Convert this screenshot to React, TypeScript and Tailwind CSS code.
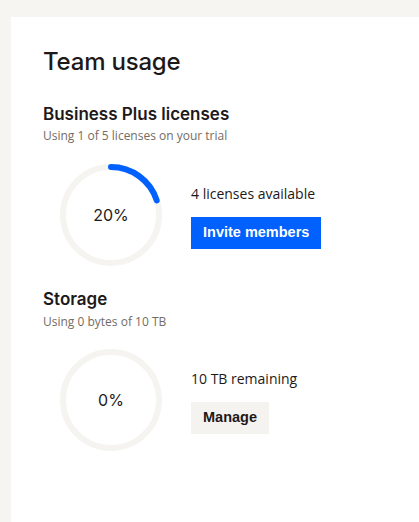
import React from "react";

function Ring({ pct, label }: { pct: number; label: string }) {
  const r = 48;
  const c = 2 * Math.PI * r;
  return (
    <div className="relative w-[104px] h-[104px] shrink-0">
      <svg width="104" height="104" viewBox="0 0 104 104">
        <circle cx="52" cy="52" r={r} fill="none" stroke="#f6f4f1" strokeWidth="6" />
        {pct > 0 && (
          <circle
            cx="52"
            cy="52"
            r={r}
            fill="none"
            stroke="#0061fe"
            strokeWidth="6"
            strokeLinecap="round"
            strokeDasharray={`${(c * pct) / 100} ${c}`}
            transform="rotate(-90 52 52)"
          />
        )}
      </svg>
      <div className="absolute inset-0 flex items-center justify-center text-[16px] text-[#1e1919] font-['Inter',sans-serif]">
        {label}
      </div>
    </div>
  );
}

export default function App() {
  return (
    <div className="min-h-[522px] bg-[#f7f5f2] pl-[11px] pt-[17px] flex flex-col">
      <div className="bg-white flex-1 min-h-[505px] pl-[32px] pt-[29px] text-[#1e1919] font-['Liberation_Sans',Arial,sans-serif]">
        <h1 className="text-[24px] leading-[32px] font-medium font-['Inter',sans-serif] tracking-[-0.2px]">Team usage</h1>

        <h2 className="mt-[25px] text-[17px] leading-[22px] font-semibold font-['Inter',sans-serif]">Business Plus licenses</h2>
        <p className="mt-[3px] text-[12px] leading-[16px] text-[#736c64] font-['Open_Sans',sans-serif]">Using 1 of 5 licenses on your trial</p>

        <div className="mt-[19px] flex items-center pl-[16px]">
          <Ring pct={20} label="20%" />
          <div className="ml-[28px] pt-[3px] flex flex-col items-start">
            <div className="text-[14px] leading-[20px] font-['Open_Sans',sans-serif]">4 licenses available</div>
            <button className="mt-[13px] h-[32px] px-[12px] bg-[#0061fe] text-white text-[14.5px] font-bold">Invite members</button>
          </div>
        </div>

        <h2 className="mt-[21px] text-[17px] leading-[22px] font-semibold font-['Inter',sans-serif]">Storage</h2>
        <p className="mt-[4px] text-[12px] leading-[16px] text-[#736c64] font-['Open_Sans',sans-serif]">Using 0 bytes of 10 TB</p>

        <div className="mt-[18px] flex items-center pl-[16px]">
          <Ring pct={0} label="0%" />
          <div className="ml-[28px] pt-[3px] flex flex-col items-start">
            <div className="text-[14px] leading-[20px] font-['Open_Sans',sans-serif]">10 TB remaining</div>
            <button className="mt-[13px] h-[32px] px-[12px] bg-[#f5f3f0] text-[#1e1919] text-[14.5px] font-bold">Manage</button>
          </div>
        </div>
      </div>
    </div>
  );
}
